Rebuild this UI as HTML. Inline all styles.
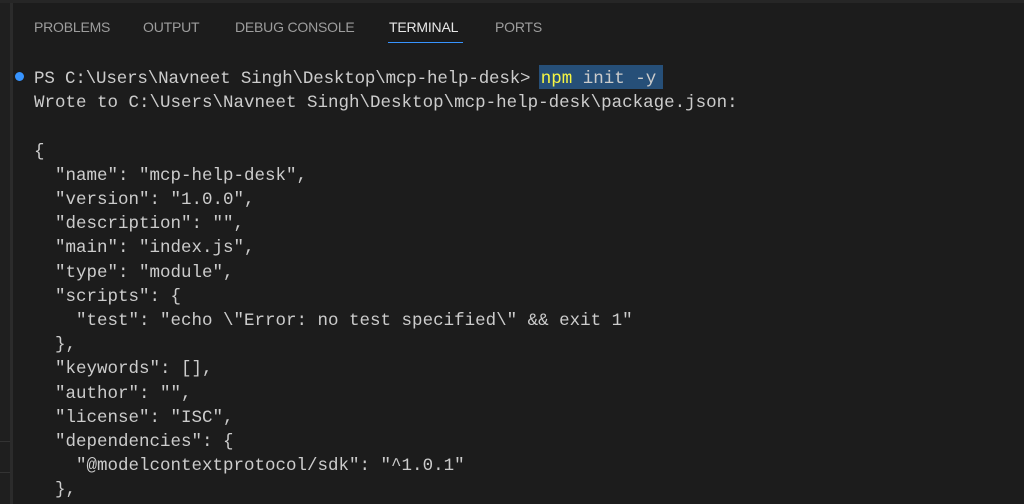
<!DOCTYPE html>
<html><head><meta charset="utf-8"><style>
html,body{margin:0;padding:0;width:1024px;height:504px;overflow:hidden;background:#1c1c1c;}
.top{position:absolute;left:0;top:0;width:1024px;height:3px;background:#262626;}
.left{position:absolute;left:0;top:3px;width:10px;height:501px;background:#1f1f1f;}
.vl{position:absolute;left:10px;top:3px;width:3px;height:501px;background:#2b2b2b;}
.hl{position:absolute;left:0;width:10px;height:1px;background:#333;}
.tab{position:absolute;top:19px;font-family:"Liberation Sans",sans-serif;font-size:14px;color:#9d9d9d;letter-spacing:-0.2px;}
.act{color:#e7e7e7;}
.ul{position:absolute;left:388px;top:42px;width:75px;height:1px;background:#3794ff;}
pre{position:absolute;left:34px;top:67px;margin:0;font-family:"Liberation Mono",monospace;font-size:17.5px;line-height:24.2px;color:#cccccc;}
.p{letter-spacing:-0.16px;}
.sel{position:absolute;left:539px;top:65px;width:124px;height:24px;background:#264f78;}
.dot{position:absolute;left:15px;top:72px;width:9px;height:9px;border-radius:50%;background:#3794ff;}
.y{color:#f5f543;}
</style></head><body>
<div class="top"></div><div class="left"></div><div class="vl"></div>
<div class="hl" style="top:441px"></div><div class="hl" style="top:472px"></div>
<div class="tab" style="left:34px">PROBLEMS</div>
<div class="tab" style="left:143px">OUTPUT</div>
<div class="tab" style="left:235px">DEBUG CONSOLE</div>
<div class="tab act" style="left:389px">TERMINAL</div>
<div class="tab" style="left:495px">PORTS</div>
<div class="ul"></div>
<div class="sel"></div>
<div class="dot"></div>
<pre><span class="p">PS C:\Users\Navneet Singh\Desktop\mcp-help-desk&gt; </span><span class="y">npm</span> init -y
Wrote to C:\Users\Navneet Singh\Desktop\mcp-help-desk\package.json:

{
  "name": "mcp-help-desk",
  "version": "1.0.0",
  "description": "",
  "main": "index.js",
  "type": "module",
  "scripts": {
    "test": "echo \"Error: no test specified\" &amp;&amp; exit 1"
  },
  "keywords": [],
  "author": "",
  "license": "ISC",
  "dependencies": {
    "@modelcontextprotocol/sdk": "^1.0.1"
  },</pre>
</body></html>
